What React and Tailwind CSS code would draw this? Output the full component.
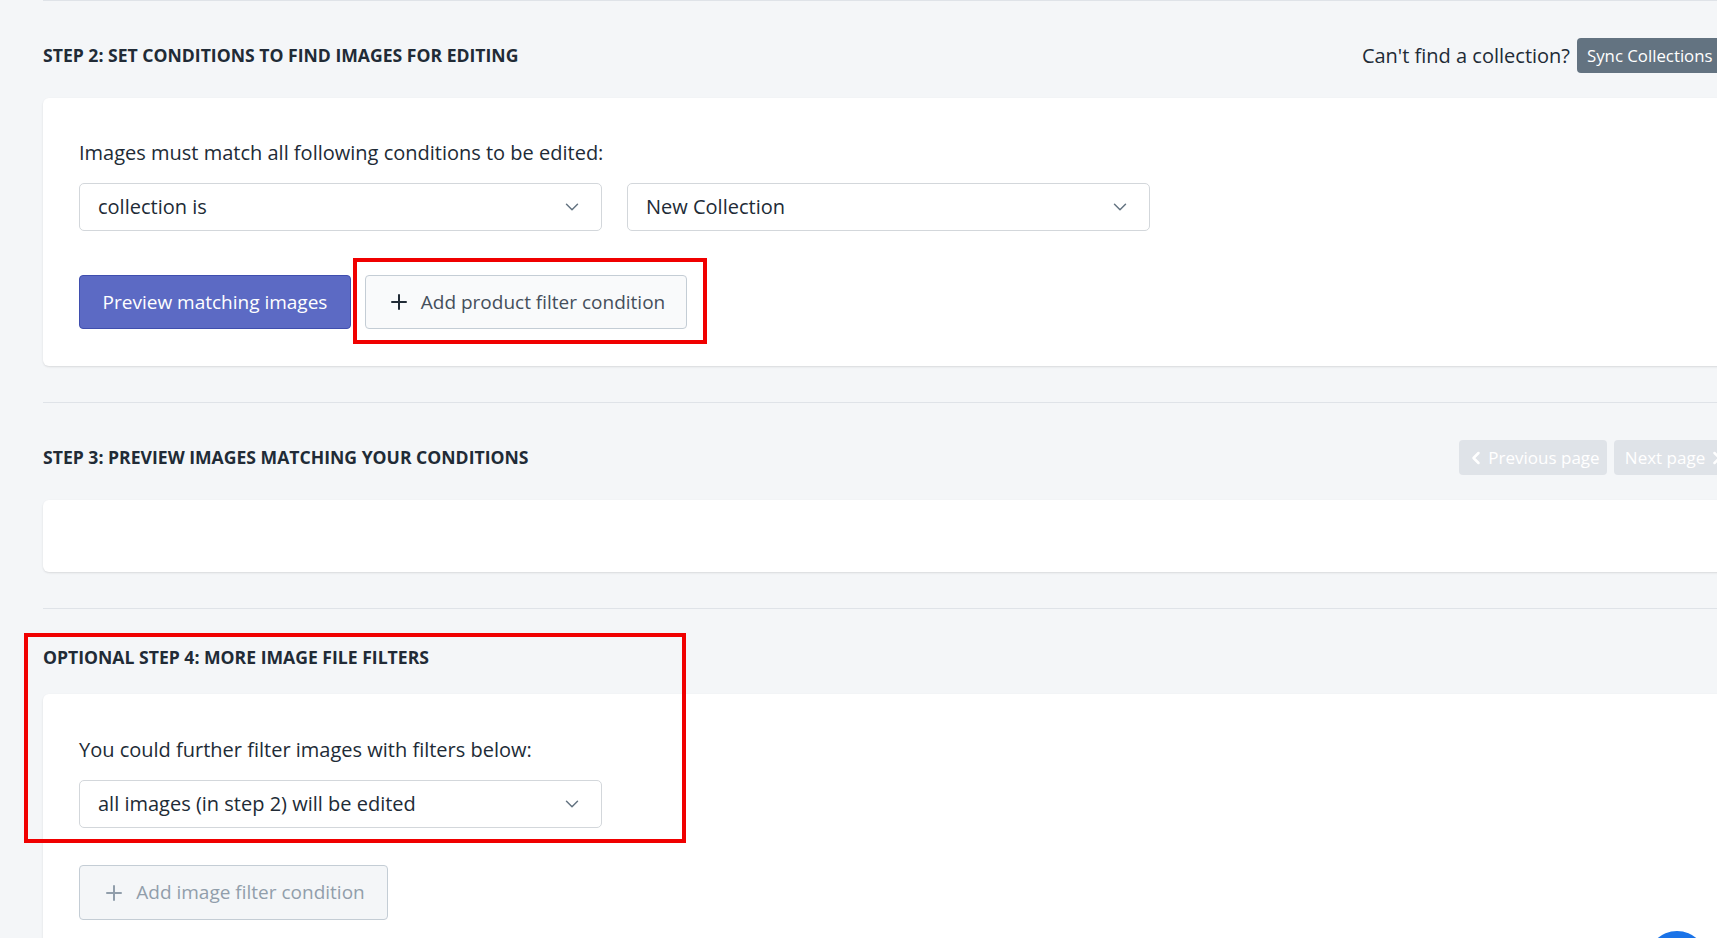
import { ChevronDown, ChevronLeft, ChevronRight, Plus } from "lucide-react";

const font = { fontFamily: '"Open Sans", "Noto Sans", sans-serif' };

function SelectBox({ value }) {
    return (
        <div className="flex h-[48px] w-[523px] items-center justify-between rounded-[5px] border border-[#d3d7db] bg-white pl-[18px] pr-[18px] text-[20px] text-[#212b36]">
            <span>{value}</span>
            <ChevronDown size={22} strokeWidth={1.6} className="text-[#637381]" />
        </div>
    );
}

function Section({ title, right, children, className = "" }) {
    return (
        <section className={`relative border-t border-[#dfe3e8] pt-[37px] pb-[36px] ${className}`}>
            <div className="flex min-h-[23px] items-center justify-between">
                <h2 className="text-[17.6px] font-bold uppercase leading-[23px] text-[#212b36]">{title}</h2>
                {right}
            </div>
            <div className="mt-[25px] rounded-l-[6px] bg-white shadow-[0_1px_2px_rgba(63,63,68,0.15)]">
                {children}
            </div>
        </section>
    );
}

export default function App() {
    return (
        <div className="relative h-[938px] w-[1717px] overflow-hidden bg-[#f4f6f8]" style={font}>
            <div className="ml-[43px] w-[1695px]">
                <Section
                    title="Step 2: Set conditions to find images for editing"
                    right={
                        <div className="flex items-center gap-[7px]">
                            <span className="text-[20px] text-[#212b36]">Can't find a collection?</span>
                            <button className="h-[35px] w-[161px] rounded-[4px] bg-[#637381] pl-[10px] pr-[11px] text-left text-[16.8px] whitespace-nowrap text-white">Sync Collections</button>
                        </div>
                    }
                >
                    <div className="px-[36px] pt-[42px] pb-[37px]">
                        <p className="text-[20px] leading-[26px] text-[#212b36]">Images must match all following conditions to be edited:</p>
                        <div className="mt-[17px] flex gap-[25px]">
                            <SelectBox value="collection is" />
                            <SelectBox value="New Collection" />
                        </div>
                        <div className="mt-[44px] flex gap-[14px]">
                            <button className="h-[54px] w-[272px] rounded-[4px] border border-[#3f4eae] bg-[#5c6ac4] text-[19px] text-white">Preview matching images</button>
                            <div className="relative">
                                <button className="flex h-[54px] w-[322px] items-center justify-center gap-[10px] rounded-[4px] border border-[#c4cdd5] bg-[#f9fafb] text-[19px] text-[#212b36]">
                                    <Plus size={24} strokeWidth={2} />
                                    <span className="text-[#454f5b]">Add product filter condition</span>
                                </button>
                                <div className="pointer-events-none absolute -top-[17px] -left-[12px] h-[86px] w-[354px] border-[4px] border-[#f00000]"></div>
                            </div>
                        </div>
                    </div>
                </Section>

                <Section
                    title="Step 3: Preview images matching your conditions"
                    right={
                        <div className="flex items-center gap-[7px]">
                            <button className="flex h-[35px] w-[148px] items-center justify-center gap-[2px] rounded-[4px] bg-[#dfe3e8] text-[17px] text-white">
                                <ChevronLeft size={20} strokeWidth={3} />
                                Previous page
                            </button>
                            <button className="flex h-[35px] w-[124px] items-center justify-center gap-[2px] rounded-[4px] bg-[#dfe3e8] text-[17px] text-white">
                                Next page
                                <ChevronRight size={20} strokeWidth={3} />
                            </button>
                        </div>
                    }
                >
                    <div className="h-[72px]"></div>
                </Section>

                <Section title="Optional Step 4: More image file filters">
                    <div className="px-[36px] pt-[43px] pb-[40px]">
                        <p className="text-[20px] leading-[26px] text-[#212b36]">You could further filter images with filters below:</p>
                        <div className="mt-[17px]">
                            <SelectBox value="all images (in step 2) will be edited" />
                        </div>
                        <div className="mt-[37px]">
                            <button className="flex h-[55px] w-[309px] items-center justify-center gap-[10px] rounded-[4px] border border-[#c4cdd5] bg-[#f4f6f8] text-[19px] text-[#919eab]">
                                <Plus size={24} strokeWidth={2} />
                                Add image filter condition
                            </button>
                        </div>
                    </div>
                    <div className="pointer-events-none absolute top-[24px] -left-[19px] h-[210px] w-[662px] border-[4px] border-[#f00000]"></div>
                </Section>
            </div>

            <div className="absolute top-[931px] left-[1647px] h-[60px] w-[60px] rounded-full bg-[#1a73e8]"></div>
        </div>
    );
}
